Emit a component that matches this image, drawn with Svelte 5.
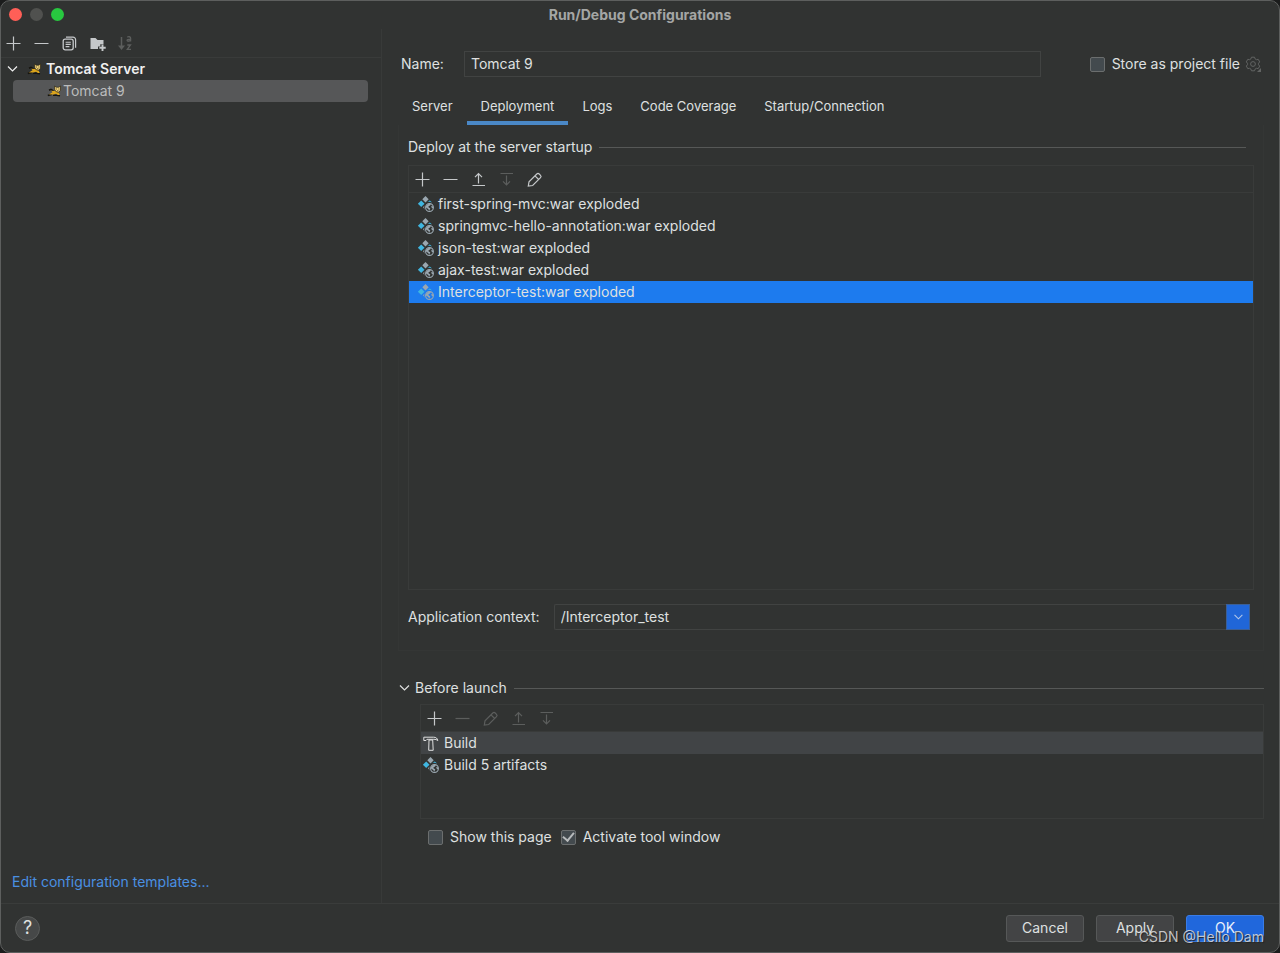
<script lang="ts">
  type Artifact = { id: number; name: string };

  const tabs = ['Server', 'Deployment', 'Logs', 'Code Coverage', 'Startup/Connection'];

  const artifacts: Artifact[] = [
    { id: 1, name: 'first-spring-mvc:war exploded' },
    { id: 2, name: 'springmvc-hello-annotation:war exploded' },
    { id: 3, name: 'json-test:war exploded' },
    { id: 4, name: 'ajax-test:war exploded' },
    { id: 5, name: 'Interceptor-test:war exploded' },
  ];

  const tasks = [
    { icon: 'hammer', name: 'Build' },
    { icon: 'artifact', name: 'Build 5 artifacts' },
  ];

  let activeTab = $state('Deployment');
  let selected = $state(5);
  let selectedTask = $state('Build');
  let name = $state('Tomcat 9');
  let context = $state('/Interceptor_test');
  let storeAsFile = $state(false);
  let showPage = $state(false);
  let activateWindow = $state(true);
</script>

{#snippet icon(kind: string)}
  <svg class="icon" width="16" height="16" viewBox="0 0 16 16" fill="none" stroke="currentColor" aria-hidden="true">
    {#if kind === 'plus'}
      <path d="M8.5 1.5v14M1.5 8.5h14" stroke-width="1.2" />
    {:else if kind === 'minus'}
      <path d="M1.5 8.5h14" stroke-width="1.2" />
    {:else if kind === 'copy'}
      <rect x="2.2" y="4.2" width="10" height="10.6" rx="2" stroke-width="1.3" />
      <path d="M5 2.100h7a2.600 2.600 0 0 1 2.600 2.600v8" stroke-width="1.200" />
      <path d="M4.600 7.200h5.200M4.600 9.400h5.200M4.600 11.600h3.800" stroke-width="1.100" />
    {:else if kind === 'folder'}
      <path d="M1.500 3h5l2 2h6v4.200h-3.200v2.200H9V14H1.500z" fill="currentColor" stroke="none" />
      <path d="M13.500 9.500v6.500M10.300 12.800h6.400" stroke-width="1.900" />
    {:else if kind === 'sort'}
      <path d="M4.500 2v10" stroke-width="1.500" />
      <path d="M1 10.500h7L4.500 15z" fill="currentColor" stroke="none" />
      <path d="M10.300 2.200c1-.8 3.300-.7 3.300.9v3.500M13.500 4.200c-1.600 0-3.400 0-3.400 1.100 0 1.400 2.600 1.100 3.400-.1M10.300 10h3.200L10.300 14.400h3.700" stroke-width="1.300" />
    {:else if kind === 'up'}
      <path d="M8.500 12.500V3M5 6.200 8.500 2.700 12 6.200M2.500 14.500h12.500" stroke-width="1.200" />
    {:else if kind === 'down'}
      <path d="M8.500 4.500v9M5 10.300l3.500 3.500 3.500-3.500M2.500 2.500h12.500" stroke-width="1.200" />
    {:else if kind === 'edit'}
      <path d="M2.300 15l.7-4.200 7.800-7.800a1.700 1.700 0 0 1 2.400 0l1.300 1.300a1.700 1.700 0 0 1 0 2.400L6.700 14.500l-4.400.5zM9 4.800l3.700 3.700" stroke-width="1.200" />
    {:else if kind === 'gear'}
      <path d="M6.500 1.200h3l.6 1.700 1.300.8 1.800-.4 1.500 2.600-1.200 1.400v1.400l1.200 1.400-1.500 2.600-1.800-.4-1.300.8-.6 1.700h-3l-.6-1.700-1.300-.8-1.800.4-1.500-2.600 1.200-1.400V7.300L1.300 5.900l1.500-2.600 1.800.4 1.300-.8z" stroke-linejoin="round" />
      <circle cx="8" cy="8" r="2.400" />
      <path d="M16 12v4h-4z" fill="currentColor" stroke="none" />
    {:else if kind === 'chevron'}
      <path d="M4 5.500l4.500 4.500L13 5.500" stroke-width="1.200" />
    {:else if kind === 'hammer'}
      <path d="M.8 5.500V2.200h9.700c2.500 0 3.900 1 4.300 3.400-1.200-1-2.300-1.300-4-1.300H4L3 5.500zM6 5h3.700l.5 10.300H5.700z" stroke-linejoin="round" />
    {:else if kind === 'artifact'}
      <g stroke="none">
        <path d="M7.500 0l3.200 3.200-3.200 3.200-3.200-3.200z" fill="#9aa7b0" />
        <path d="M3.200 4.400l3.300 3.300L3.200 11-.1 7.700z" fill="#40b6e0" />
        <path d="M9.300 6.100l2.500-1.700 2.300 2.200c-2-.9-3.300-.9-4.800-.5z" fill="#40b6e0" />
        <path d="M5 11.200l1.500-1.700c-.5 1.700-.4 3.200.6 4.400z" fill="#9aa7b0" />
      </g>
      <circle cx="11.500" cy="11.500" r="3.900" stroke="#9aa7b0" stroke-width="1.100" />
      <path d="M8 10l3-2.500 1.700.6-.6 1.500-1.600.7.2 1.200 1.600.8-.9 2.200-1.500-1.800L8 11.500zM13.300 9.800l1.900.6-.2 2.200-1.500-1z" fill="#9aa7b0" stroke="none" />
    {:else if kind === 'tomcat'}
      <path d="M2 7.200l2-.9 2.500 1.500M.8 12.500l4.200-1.300M6 12.200h3.500l3.500.6" stroke="#17150f" stroke-width="1.500" />
      <path d="M2 11.600l3.500-2.400L4.300 7.700l3.400.3 3.600 1 1.500 3-1.800-.1-2-1.200-2.600.9z" fill="#dca51c" stroke="none" />
      <path d="M7.600 3l1.700 1.200h2.500L13.600 3l-.2 4.300-1.800 2-2.300-.5-1.500-1.900z" fill="#efd27b" stroke="#29220f" stroke-width=".7" />
      <path d="M9 6h.8M11.500 6h.8M10.200 7.800h1.200" stroke="#44340b" stroke-width=".9" />
    {/if}
  </svg>
{/snippet}

{#snippet tool(kind: string, label: string, disabled = false)}
  <button type="button" class="tool" aria-label={label} {disabled}>{@render icon(kind)}</button>
{/snippet}

<div class="window">
  <header class="titlebar">
    <div class="lights">
      <button type="button" class="light close" aria-label="Close"></button>
      <button type="button" class="light" aria-label="Minimize"></button>
      <button type="button" class="light zoom" aria-label="Zoom"></button>
    </div>
    <h1>Run/Debug Configurations</h1>
  </header>

  <div class="body">
    <aside>
      <div class="toolbar side-tools">
        {@render tool('plus', 'Add')}
        {@render tool('minus', 'Remove')}
        {@render tool('copy', 'Copy')}
        {@render tool('folder', 'New folder')}
        {@render tool('sort', 'Sort', true)}
      </div>
      <div class="tree">
        <button type="button" class="node group">{@render icon('chevron')}<span class="cat">{@render icon('tomcat')}</span>Tomcat Server</button>
        <button type="button" class="node leaf">{@render icon('tomcat')}Tomcat 9</button>
      </div>
      <a class="templates" href="#templates">Edit configuration templates...</a>
    </aside>

    <main>
      <div class="name-row">
        <label for="name">Name:</label>
        <input id="name" class="field" type="text" bind:value={name} />
        <div class="store">
          <label class="check"><input type="checkbox" bind:checked={storeAsFile} />Store as project file</label>
          <button type="button" class="tool gear" aria-label="Storage settings">{@render icon('gear')}</button>
        </div>
      </div>

      <nav class="tabs">
        {#each tabs as tab (tab)}
          <button type="button" class:active={tab === activeTab} onclick={() => (activeTab = tab)}>{tab}</button>
        {/each}
      </nav>

      <section class="deployment">
        <h2 class="rule">Deploy at the server startup</h2>
        <div class="panel">
          <div class="toolbar">
            {@render tool('plus', 'Add')}
            {@render tool('minus', 'Remove')}
            {@render tool('up', 'Move up')}
            {@render tool('down', 'Move down', true)}
            {@render tool('edit', 'Edit')}
          </div>
          <ul>
            {#each artifacts as a (a.id)}
              <li>
                <button type="button" class="row" class:selected={a.id === selected} onclick={() => (selected = a.id)}>
                  {@render icon('artifact')}{a.name}
                </button>
              </li>
            {/each}
          </ul>
        </div>
        <div class="context">
          <label for="context">Application context:</label>
          <div class="combo">
            <input id="context" class="field" type="text" bind:value={context} />
            <button type="button" aria-label="Show contexts">{@render icon('chevron')}</button>
          </div>
        </div>
      </section>

      <section class="launch">
        <h2 class="rule">{@render icon('chevron')}Before launch</h2>
        <div class="panel">
          <div class="toolbar">
            {@render tool('plus', 'Add task')}
            {@render tool('minus', 'Remove task', true)}
            {@render tool('edit', 'Edit task', true)}
            {@render tool('up', 'Move task up', true)}
            {@render tool('down', 'Move task down', true)}
          </div>
          <ul>
            {#each tasks as t (t.name)}
              <li>
                <button type="button" class="row" class:current={t.name === selectedTask} onclick={() => (selectedTask = t.name)}>
                  {@render icon(t.icon)}{t.name}
                </button>
              </li>
            {/each}
          </ul>
        </div>
        <div class="options">
          <label class="check"><input type="checkbox" bind:checked={showPage} />Show this page</label>
          <label class="check"><input type="checkbox" bind:checked={activateWindow} />Activate tool window</label>
        </div>
      </section>
    </main>
  </div>

  <footer>
    <button type="button" class="help" aria-label="Help">?</button>
    <div class="actions">
      <button type="button" class="btn">Cancel</button>
      <button type="button" class="btn">Apply</button>
      <button type="button" class="btn primary">OK</button>
    </div>
    <span class="watermark">CSDN @Hello Dam</span>
  </footer>
</div>

<style>
  :global(body) { background: #1b1c1c; }
  .window, .window * { box-sizing: border-box; }
  .window {
    min-height: 100vh; display: flex; flex-direction: column; overflow: hidden;
    background: #313332; border: 1px solid #5d5f5e; border-radius: 10px;
    font: 400 14px/20px Inter, "Liberation Sans", sans-serif; color: #dfe0e0;
  }
  button, input { font: inherit; color: inherit; }
  button { padding: 0; border: 0; background: none; }
  h1, h2, ul { margin: 0; padding: 0; list-style: none; }
  .icon { display: block; flex: none; overflow: visible; }

  .titlebar { position: relative; height: 28px; display: flex; align-items: center; justify-content: center; }
  .titlebar h1 { font-size: 14px; font-weight: 700; color: #a4a6a5; }
  .lights { position: absolute; left: 8px; top: 7px; display: flex; gap: 8px; }
  .light { width: 13px; height: 13px; border-radius: 50%; background: #50514f; }
  .close { background: #ff5f57; }
  .zoom { background: #28c840; }

  .body { flex: 1; display: flex; }
  aside { width: 30%; max-width: 381px; display: flex; flex-direction: column; border-right: 1px solid #383a39; }
  .toolbar { display: flex; align-items: center; gap: 12px; height: 27px; padding-left: 5px; border-bottom: 1px solid #393b3a; }
  .side-tools { height: 29px; padding-left: 4px; }
  .tool { color: #c5c8ca; }
  .tool:disabled { color: #5c5e5d; }
  .tree { flex: 1; }
  .node { display: flex; align-items: center; height: 22px; }
  .group { width: 100%; padding-left: 3px; font-weight: 600; color: #f0f0f0; }
  .cat { margin: 0 3px 0 7px; }
  .leaf { width: calc(100% - 25px); margin-left: 12px; padding-left: 34px; border-radius: 4px; background: #565758; color: #bbbcbc; }
  .templates { margin: 0 0 11px 11px; color: #4a90e2; text-decoration: none; }

  main { flex: 1; min-width: 0; display: flex; flex-direction: column; padding: 22px 15px 56px 16px; }
  .name-row { display: flex; align-items: center; padding-left: 3px; }
  .name-row > label { width: 63px; }
  .field { height: 26px; padding: 0 6px 1px; background: none; border: 1px solid #414342; border-radius: 0; outline: none; }
  .name-row > .field { flex: 1; min-width: 0; }
  .store { display: flex; align-items: center; gap: 5px; margin-left: 49px; padding-right: 3px; }
  .gear { color: #626463; }
  .check { display: flex; align-items: center; gap: 7px; white-space: nowrap; }
  .check input {
    appearance: none; width: 15px; height: 15px; margin: 0; display: grid; place-items: center;
    background: #434a4e; border: 1px solid #6b6e6e; border-radius: 2px;
  }
  .check input:checked::before { content: ''; width: 9px; height: 5px; margin-bottom: 3px; border-left: 2px solid #b8bbbc; border-bottom: 2px solid #b8bbbc; rotate: -50deg; }

  .tabs { display: flex; margin-top: 11px; }
  .tabs button { height: 37px; padding: 0 14px; font-size: 13px; border-bottom: 4px solid transparent; border-top: 2px solid transparent; white-space: nowrap; }
  .tabs button.active { border-bottom-color: #4a88c7; }

  .deployment { flex: 1; display: flex; flex-direction: column; padding: 12px 9px 20px 9px; border: 1px solid #343635; border-top: 0; }
  .rule { display: flex; align-items: center; gap: 7px; font-size: 14px; font-weight: 400; }
  .rule::after { content: ''; flex: 1; height: 1px; background: #565857; }
  .deployment .rule { padding-right: 8px; }
  .panel { border: 1px solid #393b3a; }
  .deployment .panel { flex: 1; margin-top: 8px; }
  .row { display: flex; align-items: center; gap: 4px; width: 100%; height: 22px; padding-left: 9px; text-align: left; }
  .selected { background: #1d7bee; }
  .current { background: #414446; }

  .context { display: flex; align-items: center; gap: 14px; margin-top: 14px; padding-right: 4px; }
  .combo { flex: 1; display: flex; }
  .combo .field { flex: 1; min-width: 0; border-right: 0; border-radius: 2px 0 0 2px; }
  .combo button { width: 24px; display: grid; place-items: center; background: #2066d8; border: 1px solid #3b5f96; color: #b5c8e8; }
  .combo .icon { width: 14px; height: 14px; }

  .launch { margin-top: 27px; }
  .launch .rule { gap: 0; }
  .launch .rule .icon { margin: 0 3px 0 -2px; }
  .launch .rule::after { margin-left: 7px; }
  .launch .panel { min-height: 115px; margin: 6px 0 0 22px; }
  .launch .row { gap: 5px; padding-left: 2px; }
  .options { display: flex; gap: 9px; margin: 8px 0 0 30px; }

  footer { position: relative; height: 49px; display: flex; align-items: center; justify-content: space-between; padding: 0 15px 0 14px; border-top: 1px solid #3a3c3b; }
  .help { width: 25px; height: 25px; border-radius: 50%; background: #464848; border: 1px solid #5a5c5b; font-size: 18px; line-height: 22px; }
  .actions { display: flex; gap: 12px; }
  .btn { width: 78px; height: 27px; border-radius: 3px; background: #434445; border: 1px solid #565858; }
  .primary { background: #2067dc; border-color: #3a7ce6; color: #e8effb; }
  .watermark { position: absolute; right: 15px; bottom: 5px; color: rgba(222, 222, 222, .85); text-shadow: 1px 1px 1px #222; pointer-events: none; }
</style>
